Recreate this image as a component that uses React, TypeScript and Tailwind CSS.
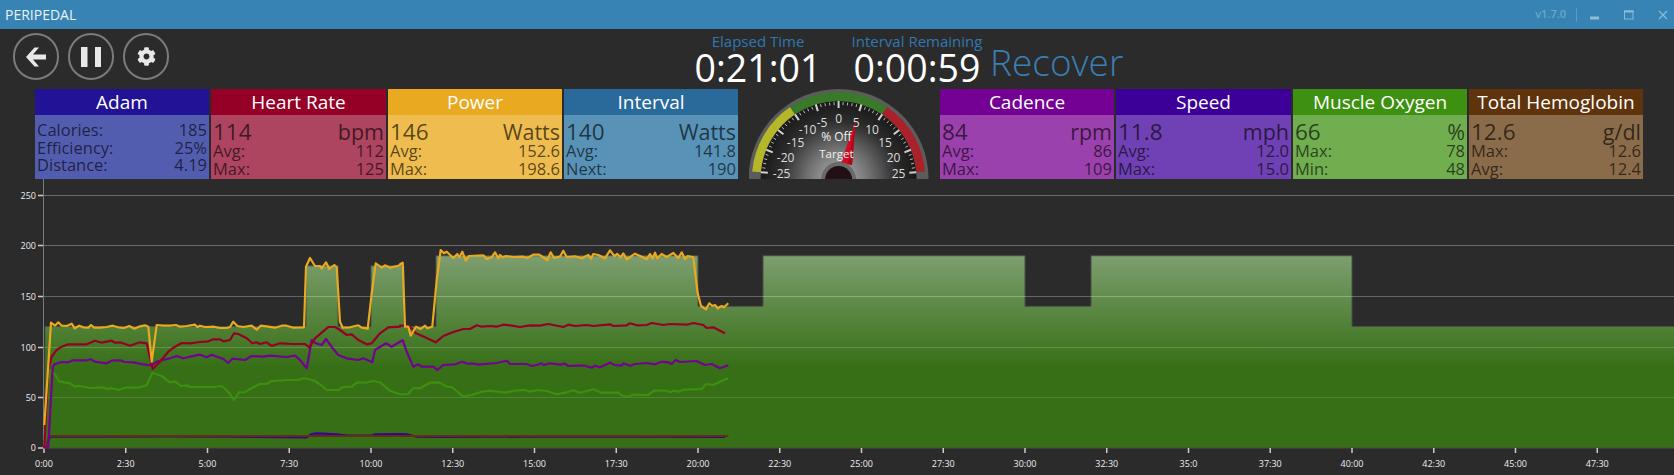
import React from "react";
import { FaCog } from "react-icons/fa";

const z4 = (s: string) => s.trim().split(/\s*;\s*/).filter(Boolean).map((p) => { const [x, y] = p.split(",").map(Number); return `${(x / 3).toFixed(1)},${(y / 3 + 180).toFixed(1)}`; });
const z5 = (s: string) => s.trim().split(/\s*;\s*/).filter(Boolean).map((p) => { const [x, y] = p.split(",").map(Number); return `${(x / 3 + 400).toFixed(1)},${(y / 3 + 180).toFixed(1)}`; });

const lines = [
  { c: "#3b009b", p: [...z4("135,805;150,770;300,770;500,769;700,770;920,772;935,762;950,760;1010,763;1040,767;1115,767;1125,763;1200,762"), ...z5("0,762;20,763;50,770;120,771;400,770;700,770;975,771")] },
  { c: "#5f3208", p: [...z4("135,805;150,768"), ...z5("985,768")] },
  { c: "#3d8f10", p: [...z4("133,805;145,600;150,572;165,583;178,604;210,610;225,620;240,618;270,624;310,622;320,627;335,625;355,630;375,623;415,623;440,615;457,578;485,588;510,607;525,604;543,618;560,616;570,621;640,621;665,618;682,632;702,660;717,637;735,636;760,622;780,612;800,612;815,603;865,600;895,600;912,594;945,603;965,617;980,630;1015,630;1030,621;1055,620;1070,608;1100,607;1120,603;1140,607;1170,632;1200,643"), ...z5("0,643;25,642;40,624;60,625;90,608;120,608;140,620;155,621;190,650;215,645;245,635;270,632;315,638;345,632;375,630;390,635;415,630;440,633;470,643;500,637;520,631;540,638;580,628;605,638;655,638;665,646;680,650;700,644;745,645;762,632;800,632;810,637;820,632;835,635;850,629;905,627;918,612;940,615;975,598;985,596")] },
  { c: "#740094", p: [...z4("135,805;145,800;158,560;165,552;185,546;205,547;218,541;260,541;272,538;285,545;320,550;335,542;360,541;375,546;400,547;430,553;455,556;470,545;510,535;530,528;550,535;570,530;600,524;620,532;635,524;670,537;685,549;697,536;735,540;755,528;790,530;810,527;860,531;885,527;900,540;920,565;935,480;947,490;965,495;978,477;998,505;1015,525;1040,535;1075,540;1090,535;1117,547;1125,510;1158,490;1175,500;1200,485"), ...z5("0,485;8,481;20,515;40,560;55,553;65,560;100,560;112,570;130,555;165,553;187,545;205,552;215,550;235,554;290,549;320,542;330,552;380,552;395,558;410,555;425,550;430,555;450,550;480,554;495,551;505,558;530,557;555,557;575,563;585,557;600,562;630,548;645,555;665,557;670,550;690,557;705,552;740,549;765,553;785,545;805,547;815,552;827,540;840,546;890,543;915,555;935,552;960,565;985,556")] },
  { c: "#950026", p: [...z4("133,805;145,570;155,530;170,510;185,500;205,493;260,493;285,482;305,488;335,482;345,488;365,488;390,497;420,487;440,490;458,567;480,545;505,515;525,500;545,489;570,490;600,486;625,484;640,478;660,478;670,484;690,480;702,460;715,462;740,475;757,490;770,487;780,492;800,487;815,498;840,490;880,492;915,492;928,502;945,475;965,458;985,441;1005,441;1020,450;1040,465;1055,463;1075,480;1100,493;1115,490;1140,460;1165,442;1200,440"), ...z5("0,437;15,437;30,440;48,460;75,472;107,487;130,468;160,456;190,447;210,447;230,436;245,440;270,438;290,440;310,434;330,436;360,441;390,436;420,437;445,432;490,441;505,434;525,438;560,435;580,438;630,433;640,438;680,436;690,430;710,436;740,435;755,429;790,435;810,432;860,434;880,429;910,435;920,444;940,442;975,460")] },
  { c: "#e9a920", p: [...z4("133,735;142,600;153,428;165,437;175,427;185,437;200,438;215,431;224,445;238,437;250,442;265,443;273,435;283,443;300,443;320,441;338,437;355,442;372,444;388,438;403,446;420,439;435,436;445,440;455,545;470,435;490,437;510,437;528,435;540,440;560,438;585,434;592,441;600,437;615,441;640,440;660,444;680,444;690,441;700,425;712,438;730,441;755,437;770,449;782,437;800,439;825,443;845,437;860,437;880,443;912,442;918,260;930,234;945,258;960,258;965,265;978,247;988,267;1003,255;1010,262;1020,425;1028,443;1050,442;1075,436;1085,443;1103,446;1115,340;1127,250;1145,263;1155,256;1170,263;1200,256"), ...z5("0,253;8,248;15,440;25,440;32,467;48,440;62,447;75,437;82,445;97,440;110,300;122,210;132,220;140,215;160,234;172,222;178,232;187,215;197,242;207,228;250,226;260,237;275,232;285,217;295,235;300,225;308,232;318,228;340,231;370,230;382,234;400,224;418,224;442,240;452,217;462,234;480,230;490,212;500,231;525,229;545,235;565,225;573,236;580,222;595,225;615,235;630,211;643,228;652,222;662,232;670,220;680,238;705,221;725,230;740,238;750,222;758,235;765,218;772,235;785,222;800,231;820,219;835,234;845,217;855,237;863,228;880,232;893,340;903,378;918,388;928,370;937,378;945,375;953,385;965,378;972,382;985,370")] },
];

const vy = (v: number) => 448 - v * 1.012;
const steps: [number, number][] = [[45, 120], [306, 180], [338, 120], [371, 180], [404, 120], [436, 190], [698, 140], [763, 190], [1025, 140], [1091, 190], [1352, 120], [1675, 120]];
const fillPath = (() => {
  let d = `M45 448`;
  steps.forEach(([x, v], i) => { d += ` L${x} ${vy(v)}`; const next = steps[i + 1]; if (next) d += ` L${next[0]} ${vy(v)}`; });
  return d + " L1675 448 Z";
})();

const xLabels = ["0:00", "2:30", "5:00", "7:30", "10:00", "12:30", "15:00", "17:30", "20:00", "22:30", "25:00", "27:30", "30:00", "32:30", "35:0", "37:30", "40:00", "42:30", "45:00", "47:30"];
const gridOpacity: Record<number, number> = { 50: 0.13, 100: 0.18, 150: 0.27, 200: 0.3, 250: 0.3 };

function Chart() {
  return (
    <svg viewBox="0 179 1674 296" className="block w-[1674px] h-[296px]" fontSize="9">
      <defs>
        <linearGradient id="wf" gradientUnits="userSpaceOnUse" x1="0" y1="256" x2="0" y2="368">
          <stop offset="0" stopColor="#7d9e6f" />
          <stop offset="1" stopColor="#366f15" />
        </linearGradient>
      </defs>
      <path d={fillPath} fill="url(#wf)" stroke="#4a4f46" strokeWidth="1" />
      {[0, 50, 100, 150, 200, 250].map((v, i) => {
        const y = [448, 397.5, 347.5, 296.5, 245.5, 195.5][i];
        return (
          <g key={v}>
            {v > 0 && <line x1="43" x2="1674" y1={y} y2={y} stroke="#fff" strokeOpacity={gridOpacity[v]} />}
            <line x1="38" x2="43" y1={y} y2={y} stroke="#ccc" strokeWidth="1.5" />
            <text x="36" y={y + 3} textAnchor="end" fill="#eee">{v}</text>
          </g>
        );
      })}
      <line x1="43.5" x2="43.5" y1="179" y2="448" stroke="#7a7a7a" />
      {xLabels.map((l, i) => {
        const x = 44 + i * 81.75;
        return (
          <g key={l}>
            <line x1={x} x2={x} y1="448" y2="453" stroke="#ccc" strokeWidth="1.5" />
            <text x={x} y="466.5" textAnchor="middle" fill="#eee">{l}</text>
          </g>
        );
      })}
      {lines.map((l) => (
        <polyline key={l.c} points={l.p.join(" ")} fill="none" stroke={l.c} strokeWidth="2.2" strokeLinejoin="round" />
      ))}
    </svg>
  );
}

const CX = 838.6;
const CY = 179;
const pol = (deg: number, r: number) => {
  const a = (deg * Math.PI) / 180;
  return [CX + r * Math.sin(a), CY - r * Math.cos(a)];
};
const arc = (a: number, b: number, r: number) => {
  const [x1, y1] = pol(a, r);
  const [x2, y2] = pol(b, r);
  return `M${x1} ${y1} A${r} ${r} 0 0 1 ${x2} ${y2}`;
};

const gaugeLabels: [string, number, number][] = [
  ["-25", -57, 173], ["-20", -53, 157], ["-15", -43, 142], ["-10", -31, 129], ["-5", -16.5, 122], ["0", 0, 118.5],
  ["5", 17.5, 122], ["10", 33.5, 129], ["15", 46.5, 142], ["20", 55, 157], ["25", 60, 173],
];

function Gauge() {
  const major = Array.from({ length: 11 }, (_, i) => -85 + i * 17);
  const minor = Array.from({ length: 51 }, (_, i) => -85 + i * 3.4).filter((_, i) => i % 5 !== 0);
  return (
    <svg viewBox="749 89 180 90" className="block w-[180px] h-[90px] ml-[9px] mr-[9px] shrink-0 overflow-visible">
      <defs>
        <radialGradient id="dial" gradientUnits="userSpaceOnUse" cx={CX} cy={CY} r="78">
          <stop offset="0" stopColor="#b5b5b5" />
          <stop offset="0.4" stopColor="#707070" />
          <stop offset="0.75" stopColor="#2c2c2c" />
          <stop offset="1" stopColor="#191919" />
        </radialGradient>
        <clipPath id="gaugeClip"><rect x="749" y="89" width="180" height="90" /></clipPath>
      </defs>
      <g clipPath="url(#gaugeClip)">
        <circle cx={CX} cy={CY} r="90" fill="#5c5c5c" />
        <circle cx={CX} cy={CY} r="78" fill="url(#dial)" />
        <path d={arc(-85, -34, 82.4)} fill="none" stroke="#b3b728" strokeWidth="8.6" />
        <path d={arc(-34, 34, 82.4)} fill="none" stroke="#387a28" strokeWidth="8.6" />
        <path d={arc(34, 85, 82.4)} fill="none" stroke="#aa2129" strokeWidth="8.6" />
        {minor.map((a) => {
          const [x1, y1] = pol(a, 77);
          const [x2, y2] = pol(a, 74);
          return <line key={a} x1={x1} y1={y1} x2={x2} y2={y2} stroke="#bbb" strokeWidth="1" />;
        })}
        {major.map((a) => {
          const [x1, y1] = pol(a, 78);
          const [x2, y2] = pol(a, 71);
          return <line key={a} x1={x1} y1={y1} x2={x2} y2={y2} stroke="#d0d0d0" strokeWidth="2" />;
        })}
        <polygon points="855.7,120 852,165 841,163" fill="#d20a22" />
        <polygon points="855.7,120 852,165 848,164" fill="#a80a1c" />
      </g>
      {gaugeLabels.map(([t, dx, y]) => (
        <text key={t} x={CX + dx} y={y + 4.5} textAnchor="middle" fontSize="12" fill="#ddd">{t}</text>
      ))}
      <text x="836.4" y="141" textAnchor="middle" fontSize="12" fill="#f2f2f2">% Off</text>
      <text x="836.4" y="158" textAnchor="middle" fontSize="11.5" fill="#f2f2f2">Target</text>
      <g clipPath="url(#gaugeClip)">
        <circle cx={CX} cy="179.5" r="17.5" fill="#6a6a6a" />
        <circle cx={CX} cy="179.5" r="13.5" fill="#231014" />
      </g>
    </svg>
  );
}

type PanelData = { title: string; head: string; body: string; w: string; rows: [string, string][]; big?: [string, string] };

function Row({ a, b }: { a: string; b: string }) {
  return (
    <div className="flex justify-between h-[17.5px] leading-[17.5px]">
      <span>{a}</span>
      <span>{b}</span>
    </div>
  );
}

function Panel({ p }: { p: PanelData }) {
  return (
    <div className={`${p.w} shrink-0 flex flex-col h-[90px]`}>
      <div className={`${p.head} h-[26px] leading-[26px] text-center text-white text-[19px]`}>{p.title}</div>
      <div className={`${p.body} h-[64px] px-[2px] text-black/65 text-[16.5px]`}>
        {p.big ? (
          <div className="flex justify-between h-[27px] leading-[33px] text-[21.5px]">
            <span className="text-[22.5px]">{p.big[0]}</span>
            <span>{p.big[1]}</span>
          </div>
        ) : (
          <div className="h-[6px]" />
        )}
        {p.rows.map(([a, b]) => <Row key={a} a={a} b={b} />)}
      </div>
    </div>
  );
}

const left: PanelData[] = [
  { title: "Adam", head: "bg-[#211296]", body: "bg-[#535db0]", w: "w-[174px]", rows: [["Calories:", "185"], ["Efficiency:", "25%"], ["Distance:", "4.19"]] },
  { title: "Heart Rate", head: "bg-[#950027]", body: "bg-[#ae4560]", w: "w-[175px]", big: ["114", "bpm"], rows: [["Avg:", "112"], ["Max:", "125"]] },
  { title: "Power", head: "bg-[#e9a920]", body: "bg-[#efbd4f]", w: "w-[174px]", big: ["146", "Watts"], rows: [["Avg:", "152.6"], ["Max:", "198.6"]] },
  { title: "Interval", head: "bg-[#2a6a9a]", body: "bg-[#5892b6]", w: "w-[174px]", big: ["140", "Watts"], rows: [["Avg:", "141.8"], ["Next:", "190"]] },
];
const right: PanelData[] = [
  { title: "Cadence", head: "bg-[#740094]", body: "bg-[#9b41ad]", w: "w-[174px]", big: ["84", "rpm"], rows: [["Avg:", "86"], ["Max:", "109"]] },
  { title: "Speed", head: "bg-[#3c0099]", body: "bg-[#7041b4]", w: "w-[175px]", big: ["11.8", "mph"], rows: [["Avg:", "12.0"], ["Max:", "15.0"]] },
  { title: "Muscle Oxygen", head: "bg-[#3d9010]", body: "bg-[#70ae50]", w: "w-[174px]", big: ["66", "%"], rows: [["Max:", "78"], ["Min:", "48"]] },
  { title: "Total Hemoglobin", head: "bg-[#5f340c]", body: "bg-[#8b6c4a]", w: "w-[174px]", big: ["12.6", "g/dl"], rows: [["Max:", "12.6"], ["Avg:", "12.4"]] },
];

function CircleButton({ children }: { children: React.ReactNode }) {
  return (
    <button className="w-[46px] h-[47px] rounded-full border-2 border-[#7b7b7b] flex items-center justify-center text-[#e8e8e8]">
      {children}
    </button>
  );
}

function Timer({ label, time }: { label: string; time: string }) {
  return (
    <div className="w-[140px] flex flex-col items-center">
      <div className="h-[22px] pt-[2px] leading-[20px] text-[15px] text-[#2f78b0]">{label}</div>
      <div className="h-[34px] leading-[34px] text-[37.5px] text-white">{time}</div>
    </div>
  );
}

export default function App() {
  return (
    <div className="w-[1674px] h-[475px] overflow-hidden bg-[#2b2b2b] font-['Open_Sans',sans-serif]">
      <div className="h-[29px] bg-[#3783b3] flex items-center pl-[5px] pr-[6px]">
        <span className="text-[14px] text-white/90">PERIPEDAL</span>
        <span className="ml-auto text-[11px] font-semibold text-[#6ba6cc]">v1.7.0</span>
        <div className="w-px h-[14px] bg-[#5f9cc4] ml-[10px]" />
        <svg viewBox="0 0 10 10" className="w-[10px] h-[10px] ml-[13px]"><rect x="0" y="6.5" width="9" height="3" fill="#8dbcd9" /></svg>
        <svg viewBox="0 0 10 10" className="w-[10px] h-[10px] ml-[24px]"><rect x="0.5" y="1" width="8.5" height="8" fill="none" stroke="#8dbcd9" /><rect x="0" y="0.5" width="9.5" height="2" fill="#8dbcd9" /></svg>
        <svg viewBox="0 0 10 10" className="w-[10px] h-[10px] ml-[24px]"><path d="M1 1L9 9M9 1L1 9" stroke="#8dbcd9" strokeWidth="1.2" /></svg>
      </div>
      <div className="h-[60px] flex items-start">
        <div className="flex gap-[9px] ml-[13px] mt-[4px]">
          <CircleButton>
            <svg viewBox="0 0 20 20" className="w-[20px] h-[20px]" fill="currentColor"><path d="M0 10L8.5 0.5H13L7 7.5H20V12.5H7L13 19.5H8.5Z" /></svg>
          </CircleButton>
          <CircleButton>
            <svg viewBox="0 0 20 20" className="w-[20px] h-[20px]" fill="currentColor"><rect x="0" y="0" width="6.5" height="20" /><rect x="14" y="0" width="6.5" height="20" /></svg>
          </CircleButton>
          <CircleButton><FaCog size={19} /></CircleButton>
        </div>
        <div className="flex ml-[519px] gap-[19px]">
          <Timer label="Elapsed Time" time="0:21:01" />
          <Timer label="Interval Remaining" time="0:00:59" />
        </div>
        <div className="ml-[3px] mt-[11px] text-[37px] leading-[44px] font-light text-[#3a7fb5]">Recover</div>
      </div>
      <div className="flex h-[90px] pl-[35px] gap-[2px]">
        {left.map((p) => <Panel key={p.title} p={p} />)}
        <Gauge />
        {right.map((p) => <Panel key={p.title} p={p} />)}
      </div>
      <Chart />
    </div>
  );
}
